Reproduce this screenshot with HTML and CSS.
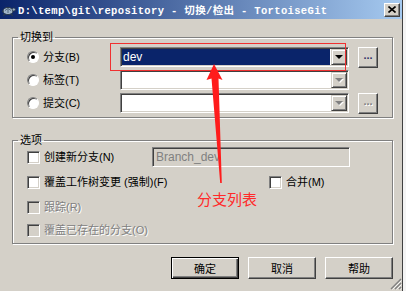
FILE: index.html
```html
<!DOCTYPE html>
<html lang="zh-CN">
<head>
  <meta charset="UTF-8" />
  <meta name="viewport" content="width=device-width, initial-scale=1" />
  <title>切换/检出 - TortoiseGit</title>
  <link rel="stylesheet" href="styles.css">
</head>
<body>

  <div class="window">
    <div class="titlebar">
      <svg class="app-icon" viewBox="0 0 14 14" width="14" height="14">
        <ellipse cx="6" cy="8" rx="5" ry="3.6" fill="#9fb4c8" stroke="#2a3a4a" stroke-width="1"/>
        <path d="M3 7.5 L6 5.5 L9 7.5 M6 5.5 V10" stroke="#41566b" stroke-width="0.8" fill="none"/>
        <circle cx="11.8" cy="6.5" r="1.6" fill="#9fb4c8" stroke="#2a3a4a" stroke-width="0.8"/>
        <path d="M2.5 11 L1.5 13 M9.5 11 L10.5 13 M1 8 L0 9" stroke="#2a3a4a" stroke-width="1.2"/>
      </svg>
      <span class="title">D:\temp\git\repository - 切换/检出 - TortoiseGit</span>
      <button class="close-btn" title="关闭">
        <svg viewBox="0 0 8 7" width="8" height="7">
          <path d="M0.5 0.5 L7.5 6.5 M7.5 0.5 L0.5 6.5" stroke="#000" stroke-width="1.6"/>
        </svg>
      </button>
    </div>

    <div class="content">
      <fieldset class="group group-switch">
        <legend>切换到</legend>

        <div class="row">
          <label class="opt-label">
            <span class="radio checked"></span>分支(B)
          </label>
          <div class="combo selected">
            <span class="combo-text">dev</span>
            <span class="drop-btn"><i class="tri"></i></span>
          </div>
          <button class="dots-btn">...</button>
        </div>

        <div class="row">
          <label class="opt-label">
            <span class="radio"></span>标签(T)
          </label>
          <div class="combo">
            <span class="combo-text"></span>
            <span class="drop-btn"><i class="tri off"></i></span>
          </div>
        </div>

        <div class="row">
          <label class="opt-label">
            <span class="radio"></span>提交(C)
          </label>
          <div class="combo">
            <span class="combo-text"></span>
            <span class="drop-btn"><i class="tri off"></i></span>
          </div>
          <button class="dots-btn" disabled>...</button>
        </div>
      </fieldset>

      <fieldset class="group group-options">
        <legend>选项</legend>

        <div class="row row-first">
          <label class="check-label new-branch">
            <span class="check"></span>创建新分支(N)
          </label>
          <div class="edit disabled">Branch_dev</div>
        </div>

        <div class="row row-next">
          <label class="check-label force">
            <span class="check"></span>覆盖工作树变更 (强制)(F)
          </label>
          <label class="check-label">
            <span class="check"></span>合并(M)
          </label>
        </div>

        <div class="row row-next">
          <label class="check-label off">
            <span class="check"></span>跟踪(R)
          </label>
        </div>

        <div class="row row-last">
          <label class="check-label off">
            <span class="check"></span>覆盖已存在的分支(O)
          </label>
        </div>
      </fieldset>

      <div class="buttons">
        <button class="btn default">确定</button>
        <button class="btn">取消</button>
        <button class="btn">帮助</button>
      </div>
    </div>

    <svg class="grip" viewBox="0 0 12 12" width="12" height="12">
      <path d="M11 1 L1 11 M11 5 L5 11 M11 9 L9 11" stroke="#808080" stroke-width="1.4"/>
      <path d="M11.5 2.5 L2.5 11.5 M11.5 6.5 L6.5 11.5 M11.5 10.5 L10.5 11.5" stroke="#fff" stroke-width="0.8"/>
    </svg>

    <!-- red notes drawn on top of the screenshot -->
    <div class="note-box"></div>
    <svg class="note-arrow" viewBox="0 0 406 291" width="406" height="291">
      <polygon points="214,64 222.5,80 218.5,78.5 221.8,183 220.2,183 211.5,78.5 206.5,80" fill="#ff1c1c"/>
    </svg>
    <span class="note-text">分支列表</span>
  </div>

</body>
</html>
```

FILE: styles.css
```css
* {
  box-sizing: border-box;
}

html, body {
  margin: 0;
  padding: 0;
}

body {
  background-color: #f4f4f4;
  color: #000;
  font-family: "Liberation Sans", "Noto Sans CJK SC", sans-serif;
  font-size: 11px;
}

.window {
  position: relative;
  width: 403px;
  height: 291px;
  background-color: #d4d0c8;
  border-right: 1px solid #404040;
  overflow: hidden;
}

/* title bar */
.titlebar {
  display: flex;
  align-items: center;
  height: 19px;
  padding: 0 2px 0 2px;
  background: linear-gradient(to right, #0a246a, #a6caf0);
}

.app-icon {
  flex: none;
  margin-right: 2px;
}

.title {
  color: #fff;
  font-family: "Liberation Mono", "Noto Sans CJK SC", monospace;
  font-weight: bold;
  font-size: 10.5px;
  letter-spacing: 0.35px;
  white-space: nowrap;
}

.close-btn {
  display: flex;
  align-items: center;
  justify-content: center;
  width: 16px;
  height: 14px;
  margin-left: auto;
  padding: 0;
  background-color: #d4d0c8;
  border: 1px solid;
  border-color: #fff #404040 #404040 #fff;
  box-shadow: inset -1px -1px 0 #808080;
}

/* dialog body */
.content {
  padding: 12px 9px 0 12px;
}

.group {
  margin: 0;
  padding: 3px 10px 4px 14px;
  border: 1px solid #808080;
  box-shadow: inset 1px 1px 0 #fff, 1px 1px 0 #fff;
}

.group legend {
  margin-left: -9px;
  padding: 0 2px;
  line-height: 13px;
}

.group-options {
  margin-top: 16px;
  padding-top: 0;
  padding-bottom: 3px;
}

.row {
  display: flex;
  align-items: center;
  height: 20px;
}

.group-switch .row + .row {
  margin-top: 3px;
}

.row-next {
  margin-top: 5px;
}

.row-last {
  margin-top: 3px;
}

.opt-label,
.check-label {
  display: flex;
  align-items: center;
  line-height: 13px;
  white-space: nowrap;
}

.opt-label {
  width: 93px;
}

.new-branch {
  width: 125px;
}

.force {
  width: 242px;
}

.check-label.off {
  color: #808080;
  text-shadow: 1px 1px 0 #fff;
}

/* radio and check boxes */
.radio {
  position: relative;
  width: 12px;
  height: 12px;
  margin-right: 4px;
  border-radius: 50%;
  background-color: #fff;
  border: 1px solid;
  border-color: #808080 #fff #fff #808080;
  box-shadow: inset 1px 1px 0 #404040;
}

.radio.checked::after {
  content: "";
  position: absolute;
  left: 3px;
  top: 3px;
  width: 4px;
  height: 4px;
  border-radius: 50%;
  background-color: #000;
}

.check {
  width: 13px;
  height: 13px;
  margin-right: 4px;
  background-color: #fff;
  border: 1px solid;
  border-color: #808080 #fff #fff #808080;
  box-shadow: inset 1px 1px 0 #404040, inset -1px -1px 0 #d4d0c8;
}

.check-label.off .check {
  background-color: #d4d0c8;
}

/* combo, edit and small buttons */
.combo {
  display: flex;
  width: 229px;
  height: 20px;
  padding: 2px;
  background-color: #fff;
  border: 1px solid;
  border-color: #808080 #fff #fff #808080;
  box-shadow: inset 1px 1px 0 #404040, inset -1px -1px 0 #d4d0c8;
}

.combo-text {
  flex: 1;
  margin: -1px 1px -1px -1px;
  padding-left: 1px;
  line-height: 16px;
  font-size: 12px;
}

.combo.selected .combo-text {
  background-color: #0a246a;
  color: #fff;
}

.drop-btn {
  display: flex;
  align-items: center;
  justify-content: center;
  width: 16px;
  margin: -1px -1px -1px 0;
  background-color: #d4d0c8;
  border: 1px solid;
  border-color: #d4d0c8 #404040 #404040 #d4d0c8;
  box-shadow: inset 1px 1px 0 #fff, inset -1px -1px 0 #808080;
}

.tri {
  width: 0;
  height: 0;
  border-left: 4px solid transparent;
  border-right: 4px solid transparent;
  border-top: 4px solid #000;
}

.tri.off {
  border-top-color: #808080;
  filter: drop-shadow(1px 1px 0 #fff);
}

.dots-btn {
  width: 20px;
  height: 21px;
  margin-left: 9px;
  padding: 0 0 4px;
  font-family: "Liberation Sans", sans-serif;
  font-size: 11px;
  font-weight: bold;
  letter-spacing: 0;
  color: #333366;
  background-color: #d4d0c8;
  border: 1px solid;
  border-color: #fff #404040 #404040 #fff;
  box-shadow: inset -1px -1px 0 #808080;
}

.dots-btn:disabled {
  color: #808080;
  text-shadow: 1px 1px 0 #fff;
}

.edit {
  width: 198px;
  height: 20px;
  padding: 0 3px;
  line-height: 18px;
  font-size: 12px;
  border: 1px solid;
  border-color: #808080 #fff #fff #808080;
  box-shadow: inset 1px 1px 0 #404040, inset -1px -1px 0 #d4d0c8;
}

.edit.disabled {
  color: #808080;
  background-color: #d4d0c8;
}

/* bottom buttons */
.buttons {
  display: flex;
  justify-content: flex-end;
  gap: 9px;
  margin-top: 13px;
}

.btn {
  width: 68px;
  height: 22px;
  padding: 0;
  font-family: "Liberation Sans", "Noto Sans CJK SC", sans-serif;
  font-size: 11px;
  color: #000;
  background-color: #d4d0c8;
  border: 1px solid;
  border-color: #fff #404040 #404040 #fff;
  box-shadow: inset -1px -1px 0 #808080;
}

.btn.default {
  border-color: #000;
  box-shadow: inset 1px 1px 0 #fff, inset -1px -1px 0 #404040, inset -2px -2px 0 #808080;
}

.grip {
  position: absolute;
  right: 0;
  bottom: 1px;
}

/* annotations */
.note-box {
  position: absolute;
  left: 110px;
  top: 43px;
  width: 236px;
  height: 28px;
  border: 1px solid #f03030;
}

.note-arrow {
  position: absolute;
  left: 0;
  top: 0;
  pointer-events: none;
}

.note-text {
  position: absolute;
  left: 197px;
  top: 190px;
  color: #ff2a2a;
  font-family: "Noto Sans CJK SC", sans-serif;
  font-size: 15px;
  line-height: 18px;
}
```
